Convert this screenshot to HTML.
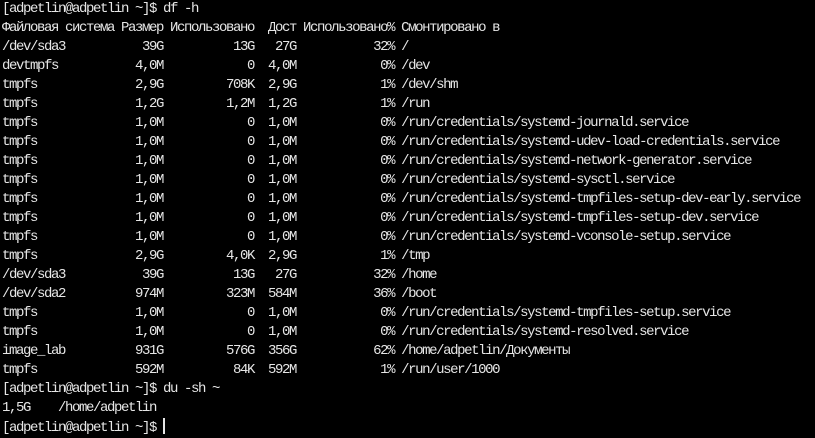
<!DOCTYPE html>
<html><head><meta charset="utf-8"><style>
html,body{margin:0;padding:0;background:#000;width:815px;height:435px;overflow:hidden}
pre{margin:0;position:absolute;left:2px;top:0px;font-family:"Liberation Mono","DejaVu Sans Mono",monospace;font-size:14px;letter-spacing:-1.4px;line-height:19px;color:#e6e6e6}
.cur{display:inline-block;width:2px;height:16px;background:#e6e6e6;vertical-align:-3px;margin-left:0px}
</style></head><body><pre>[adpetlin@adpetlin ~]$ df -h
Файловая система Размер Использовано  Дост Использовано% Смонтировано в
/dev/sda3           39G          13G   27G           32% /
devtmpfs           4,0M            0  4,0M            0% /dev
tmpfs              2,9G         708K  2,9G            1% /dev/shm
tmpfs              1,2G         1,2M  1,2G            1% /run
tmpfs              1,0M            0  1,0M            0% /run/credentials/systemd-journald.service
tmpfs              1,0M            0  1,0M            0% /run/credentials/systemd-udev-load-credentials.service
tmpfs              1,0M            0  1,0M            0% /run/credentials/systemd-network-generator.service
tmpfs              1,0M            0  1,0M            0% /run/credentials/systemd-sysctl.service
tmpfs              1,0M            0  1,0M            0% /run/credentials/systemd-tmpfiles-setup-dev-early.service
tmpfs              1,0M            0  1,0M            0% /run/credentials/systemd-tmpfiles-setup-dev.service
tmpfs              1,0M            0  1,0M            0% /run/credentials/systemd-vconsole-setup.service
tmpfs              2,9G         4,0K  2,9G            1% /tmp
/dev/sda3           39G          13G   27G           32% /home
/dev/sda2          974M         323M  584M           36% /boot
tmpfs              1,0M            0  1,0M            0% /run/credentials/systemd-tmpfiles-setup.service
tmpfs              1,0M            0  1,0M            0% /run/credentials/systemd-resolved.service
image_lab          931G         576G  356G           62% /home/adpetlin/Документы
tmpfs              592M          84K  592M            1% /run/user/1000
[adpetlin@adpetlin ~]$ du -sh ~
1,5G    /home/adpetlin
[adpetlin@adpetlin ~]$ <span class="cur"></span></pre></body></html>
